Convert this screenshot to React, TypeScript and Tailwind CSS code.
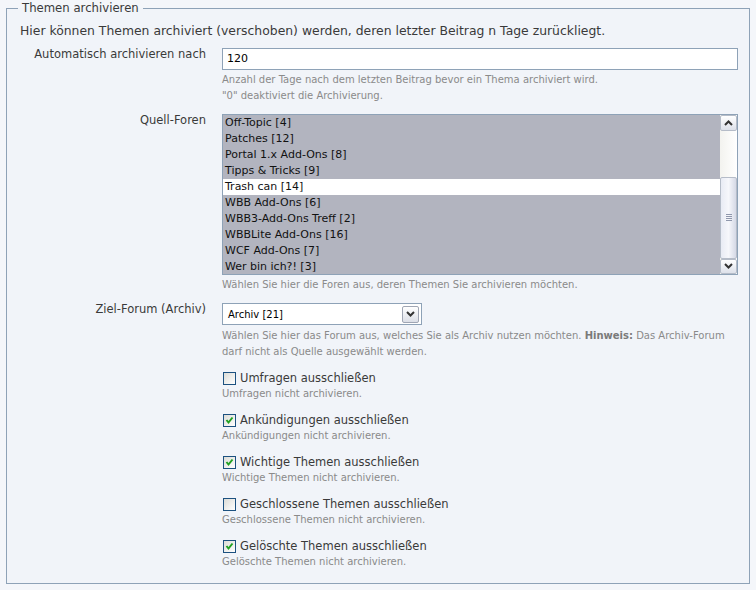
import React from "react";

const font = { fontFamily: '"DejaVu Sans", Verdana, sans-serif' };

function Chevron({ up = false }: { up?: boolean }) {
  return (
    <svg width="9" height="6" viewBox="0 0 9 6" className={up ? "rotate-180" : ""}>
      <path d="M1 1 L4.5 4.5 L8 1" fill="none" stroke="#333" strokeWidth="2" />
    </svg>
  );
}

function Check({ checked }: { checked: boolean }) {
  return (
    <span className="relative inline-block w-[13px] h-[13px] border border-[#1c5180] bg-gradient-to-br from-[#dcdcd7] to-white shrink-0">
      {checked && (
        <svg width="11" height="11" viewBox="0 0 11 11" className="absolute left-0 top-0">
          <path d="M2.5 5 L4.5 7.5 L8.5 2.5" fill="none" stroke="#21a121" strokeWidth="2" />
        </svg>
      )}
    </span>
  );
}

const forums = [
  ["Off-Topic [4]", true],
  ["Patches [12]", true],
  ["Portal 1.x Add-Ons [8]", true],
  ["Tipps & Tricks [9]", true],
  ["Trash can [14]", false],
  ["WBB Add-Ons [6]", true],
  ["WBB3-Add-Ons Treff [2]", true],
  ["WBBLite Add-Ons [16]", true],
  ["WCF Add-Ons [7]", true],
  ["Wer bin ich?! [3]", true],
] as const;

const options: [string, string, boolean][] = [
  ["Umfragen ausschließen", "Umfragen nicht archivieren.", false],
  ["Ankündigungen ausschließen", "Ankündigungen nicht archivieren.", true],
  ["Wichtige Themen ausschließen", "Wichtige Themen nicht archivieren.", true],
  ["Geschlossene Themen ausschließen", "Geschlossene Themen nicht archivieren.", false],
  ["Gelöschte Themen ausschließen", "Gelöschte Themen nicht archivieren.", true],
];

function Row({ label, children }: { label?: string; children: React.ReactNode }) {
  return (
    <div className="flex">
      <div className="w-[199px] text-right text-[11.5px] leading-[12px] text-[#3a3a3a] shrink-0">{label}</div>
      <div className="ml-[16px] w-[516px]">{children}</div>
    </div>
  );
}

export default function App() {
  return (
    <div style={font} className="w-[756px] h-[590px] bg-[#f4f6fa] px-[6px] pt-[1px] overflow-hidden">
      <fieldset className="border border-[#8ea2b7] bg-[#f1f4f9] h-[583px] px-0 pb-0 m-0">
        <legend className="ml-[11px] px-[4px] text-[11.7px] leading-[14px] text-[#3a3a3a]">Themen archivieren</legend>
        <div className="pl-[13px] mt-[8px] text-[12.4px] leading-[16px] text-[#3a3a3a]">
          Hier können Themen archiviert (verschoben) werden, deren letzter Beitrag n Tage zurückliegt.
        </div>
        <div className="mt-[9px]">
          <Row label="Automatisch archivieren nach">
            <div className="h-[22px] border border-[#8ea2b7] bg-white text-[11px] leading-[20px] pl-[4px] text-black">120</div>
            <div className="mt-[2px] text-[10px] leading-[16px] text-[#8a8a8a]">
              Anzahl der Tage nach dem letzten Beitrag bevor ein Thema archiviert wird.
              <br />"0" deaktiviert die Archivierung.
            </div>
          </Row>
        </div>
        <div className="mt-[10px]">
          <Row label="Quell-Foren">
            <div className="flex h-[161px] border border-[#8ea2b7] bg-[#b2b4bf]">
              <div className="flex-1 flex flex-col">
                {forums.map(([name, sel]) => (
                  <div
                    key={name}
                    className={`h-[16px] leading-[16px] text-[11px] pl-[2px] text-[#111] ${sel ? "" : "bg-white"}`}
                  >
                    {name}
                  </div>
                ))}
              </div>
              <div className="w-[17px] flex flex-col bg-gradient-to-r from-[#f3f3ef] to-white">
                <div className="h-[16px] m-[0px] border border-[#b5bcc8] rounded-[2px] bg-gradient-to-b from-white to-[#dde1ea] flex items-center justify-center">
                  <Chevron up />
                </div>
                <div className="flex-1 flex flex-col">
                  <div className="h-[46px]" />
                  <div className="h-[82px] border border-[#b5bcc8] rounded-[2px] bg-gradient-to-r from-[#e8ebf4] via-[#f6f7fb] to-[#d5d9e6] flex flex-col items-center justify-center gap-[1px]">
                    <div className="w-[6px] h-px bg-[#8f97ac]" />
                    <div className="w-[6px] h-px bg-[#8f97ac]" />
                    <div className="w-[6px] h-px bg-[#8f97ac]" />
                    <div className="w-[6px] h-px bg-[#8f97ac]" />
                  </div>
                </div>
                <div className="h-[16px] border border-[#b5bcc8] rounded-[2px] bg-gradient-to-b from-white to-[#dde1ea] flex items-center justify-center">
                  <Chevron />
                </div>
              </div>
            </div>
            <div className="mt-[2px] text-[10px] leading-[16px] text-[#8a8a8a]">
              Wählen Sie hier die Foren aus, deren Themen Sie archivieren möchten.
            </div>
          </Row>
        </div>
        <div className="mt-[10px]">
          <Row label="Ziel-Forum (Archiv)">
            <div className="w-[200px] h-[22px] border border-[#8ea2b7] bg-white flex items-center justify-between pl-[5px] pr-[2px]">
              <span className="text-[10px] text-black">Archiv [21]</span>
              <span className="w-[17px] h-[17px] border border-[#a0a6b4] rounded-[2px] bg-gradient-to-b from-white to-[#dcdfe7] flex items-center justify-center">
                <Chevron />
              </span>
            </div>
            <div className="mt-[3px] text-[10px] leading-[16px] text-[#8a8a8a]">
              Wählen Sie hier das Forum aus, welches Sie als Archiv nutzen möchten. <b className="font-bold text-[#7a7a7a]">Hinweis:</b> Das Archiv-Forum
              <br />darf nicht als Quelle ausgewählt werden.
            </div>
            {options.map(([label, desc, checked]) => (
              <div key={label} className="mt-[10px]">
                <div className="flex items-center gap-[4px] pl-[1px] text-[11.5px] leading-[16px] text-[#3a3a3a]">
                  <Check checked={checked} />
                  <span>{label}</span>
                </div>
                <div className="text-[10px] leading-[16px] text-[#8a8a8a]">{desc}</div>
              </div>
            ))}
          </Row>
        </div>
      </fieldset>
    </div>
  );
}
